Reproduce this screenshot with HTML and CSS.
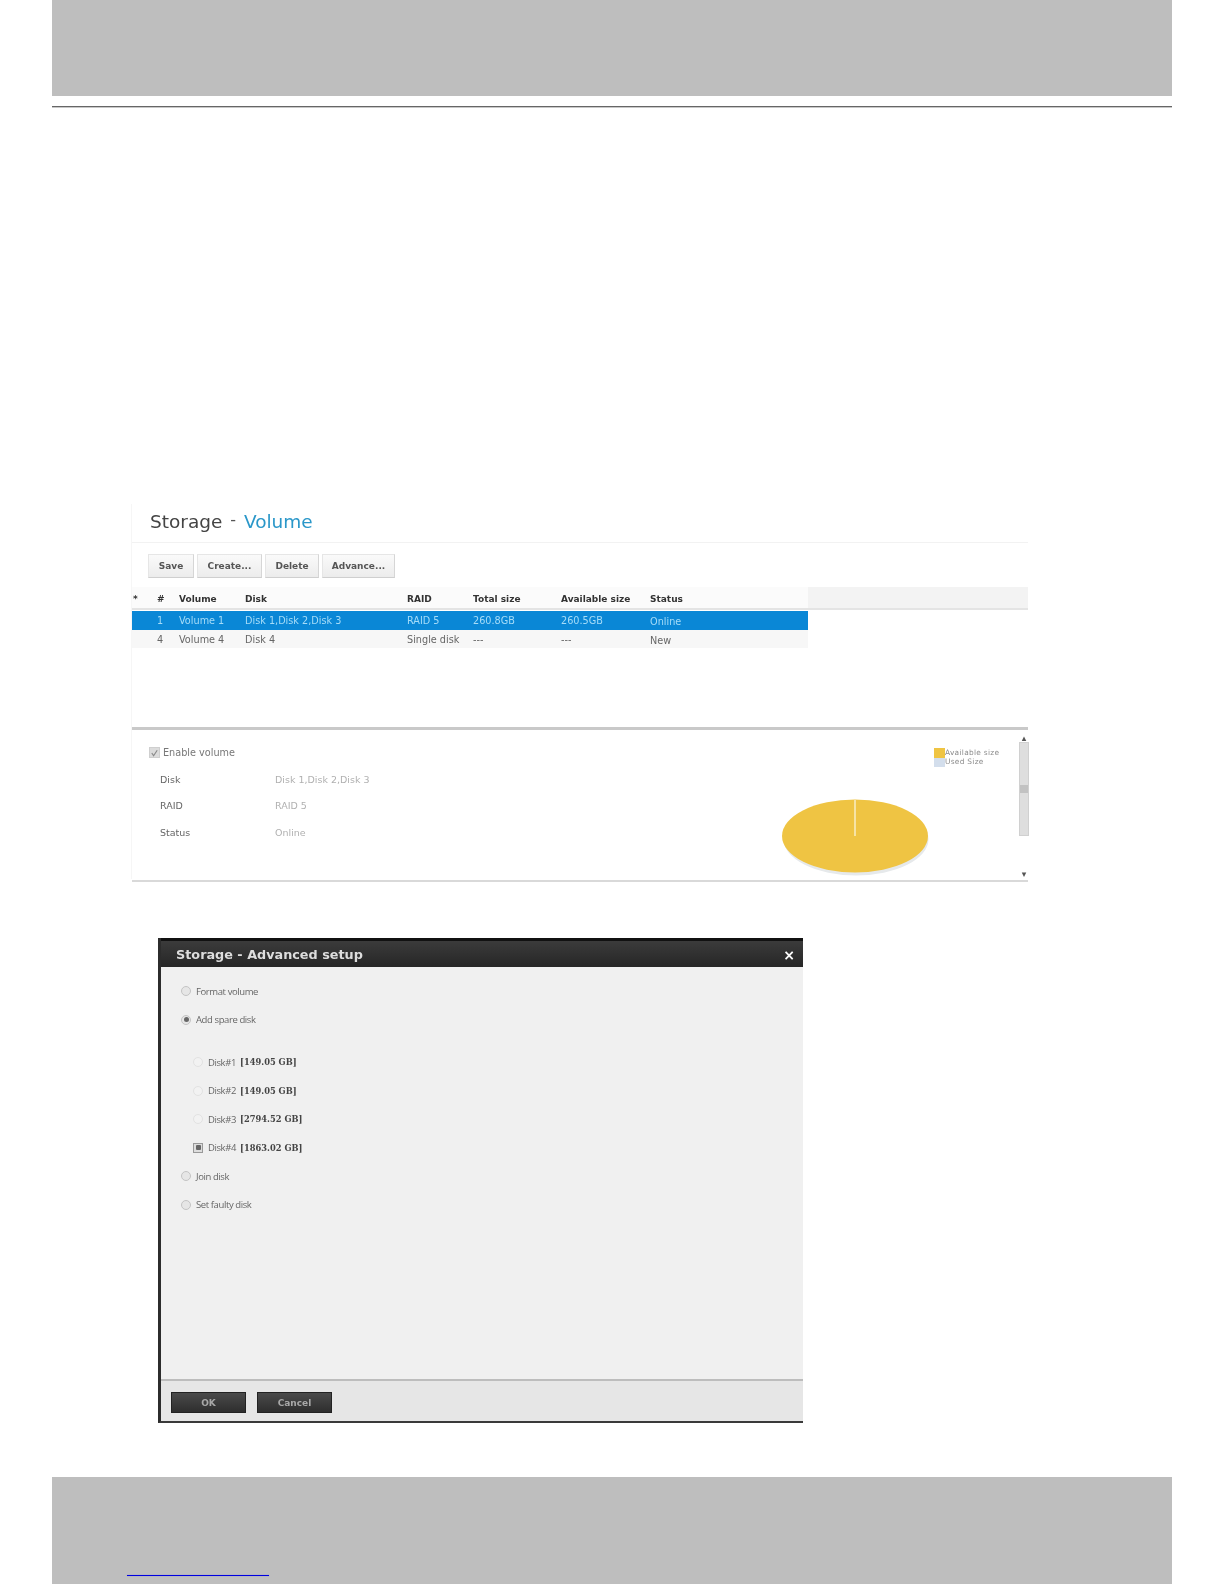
FILE: index.html
```html
<!DOCTYPE html>
<html lang="en">
<head>
<meta charset="utf-8">
<title>Storage - Volume</title>
<link rel="stylesheet" href="styles.css">
</head>
<body>
<div class="page">
  <header class="top-band"></header>
  <div class="top-rule"></div>

  <section class="volume-shot">
    <h1 class="title">Storage <span class="dash">-</span> <span class="accent">Volume</span></h1>
    <div class="toolbar">
      <button class="tool w-save">Save</button>
      <button class="tool w-create">Create...</button>
      <button class="tool w-delete">Delete</button>
      <button class="tool w-advance">Advance...</button>
    </div>
    <div class="grid-head">
      <div class="row head">
        <span>*</span><span>#</span><span>Volume</span><span>Disk</span><span>RAID</span><span>Total size</span><span>Available size</span><span>Status</span>
      </div>
    </div>
    <div class="row selected">
      <span></span><span>1</span><span>Volume 1</span><span>Disk 1,Disk 2,Disk 3</span><span>RAID 5</span><span>260.8GB</span><span>260.5GB</span><span class="nudge">Online</span>
    </div>
    <div class="row plain">
      <span></span><span>4</span><span>Volume 4</span><span>Disk 4</span><span>Single disk</span><span>---</span><span>---</span><span class="nudge">New</span>
    </div>
    <div class="splitter"></div>
    <div class="details">
      <label class="enable"><span class="check"><svg viewBox="0 0 10 10" width="10" height="10"><path d="M2 5l2 3 4-6" fill="none" stroke="#8a8a8a" stroke-width="1.3"/></svg></span>Enable volume</label>
      <dl class="info">
        <dt>Disk</dt><dd>Disk 1,Disk 2,Disk 3</dd>
        <dt>RAID</dt><dd>RAID 5</dd>
        <dt>Status</dt><dd>Online</dd>
      </dl>
      <div class="legend">
        <div class="legend-row"><i class="swatch avail"></i>Available size</div>
        <div class="legend-row"><i class="swatch used"></i>Used Size</div>
      </div>
      <svg class="pie" viewBox="0 0 160 84" width="160" height="84">
        <ellipse cx="74" cy="40" rx="72.5" ry="36.5" fill="#e6e9eb"/>
        <ellipse cx="73" cy="37" rx="73" ry="36.5" fill="#efc443"/>
        <path d="M73 1v36" stroke="#f9eec4" stroke-width="1.5"/>
      </svg>
      <div class="scrollbar">
        <span class="arrow">&#9652;</span>
        <div class="thumb"><i class="grip"></i></div>
        <span class="arrow">&#9662;</span>
      </div>
    </div>
  </section>

  <section class="dialog">
    <div class="dialog-head">
      <h2>Storage - Advanced setup</h2>
      <span class="close">&#215;</span>
    </div>
    <div class="dialog-body">
      <label class="opt"><i class="radio"></i>Format volume</label>
      <label class="opt"><i class="radio on"></i>Add spare disk</label>
      <div class="disks">
        <label class="opt disk"><i class="radio faint"></i>Disk#1 <b>[149.05 GB]</b></label>
        <label class="opt disk"><i class="radio faint"></i>Disk#2 <b>[149.05 GB]</b></label>
        <label class="opt disk"><i class="radio faint"></i>Disk#3 <b>[2794.52 GB]</b></label>
        <label class="opt disk"><i class="box"></i>Disk#4 <b>[1863.02 GB]</b></label>
      </div>
      <label class="opt"><i class="radio"></i>Join disk</label>
      <label class="opt"><i class="radio"></i>Set faulty disk</label>
    </div>
    <div class="dialog-foot">
      <button class="dark-btn">OK</button>
      <button class="dark-btn">Cancel</button>
    </div>
  </section>

  <footer class="bottom-band"><a class="link" href="#"></a></footer>
</div>
</body>
</html>
```
FILE: styles.css
```css
* { box-sizing: border-box; }
html, body { margin: 0; padding: 0; background: #fff; }
.page {
  width: 1224px;
  height: 1584px;
  display: flex;
  flex-direction: column;
  font-family: "DejaVu Sans", sans-serif;
  overflow: hidden;
}
.top-band { height: 96px; margin: 0 52px; background: #bebebe; flex: none; }
.top-rule { height: 1px; margin: 10px 52px 0; background: #666; flex: none; box-shadow: 0 1px 0 #c8c8c8; }

.volume-shot {
  width: 897px;
  height: 375px;
  margin: 397px 0 0 131px;
  flex: none;
  position: relative;
  border-left: 1px solid #f6f6f6;
  filter: blur(0.6px);
}
.title {
  margin: 0;
  height: 39px;
  padding: 5px 0 0 18px;
  font-size: 18.5px;
  line-height: 26px;
  font-weight: 400;
  color: #444;
  border-bottom: 1px solid #f2f2f2;
}
.dash { color: #555; position: relative; top: -3px; margin: 0 2px; font-size: 16px; }
.accent { color: #2a97c9; }
.toolbar { display: flex; gap: 3px; margin: 11px 0 0 16px; height: 24px; }
.tool {
  height: 24px;
  padding: 0;
  font: 700 9px "DejaVu Sans", sans-serif;
  color: #555;
  background: linear-gradient(#fafafa, #ececec);
  border: 1px solid #e6e6e6;
  border-bottom-color: #cfcfcf;
  border-right-color: #d6d6d6;
}
.w-save { width: 46px; }
.w-create { width: 65px; }
.w-delete { width: 54px; }
.w-advance { width: 73px; }

.grid-head {
  margin-top: 9px;
  height: 23px;
  background: #f3f3f3;
  border-bottom: 2px solid #e4e4e4;
}
.row {
  display: grid;
  grid-template-columns: 24px 22px 66px 162px 66px 88px 89px 158px;
  width: 676px;
  align-items: center;
  font-size: 9.7px;
  padding-left: 1px;
}
.head { height: 21px; padding-top: 3px; background: #fbfbfb; font-size: 9px; font-weight: 700; color: #333; }
.selected { height: 19px; background: #0a87d6; color: #a6dcf8; margin-top: 1px; }
.plain { height: 18px; background: #f7f7f7; color: #666; }
.nudge { position: relative; top: 1px; }
.splitter { margin-top: 79px; height: 3px; background: #c9c9c9; }

.details { position: relative; height: 152px; border-bottom: 2px solid #d9d9d9; padding: 15px 0 0 17px; }
.enable { display: flex; align-items: center; gap: 3px; font-size: 9.7px; color: #777; height: 14px; }
.check {
  width: 11px;
  height: 11px;
  background: #dcdcdc;
  border: 1px solid #cfcfcf;
  display: flex;
}
.check svg { display: block; }
.info {
  margin: 7px 0 0 11px;
  display: grid;
  grid-template-columns: 115px auto;
  justify-content: start;
  grid-auto-rows: 26.5px;
  align-items: center;
  font-size: 9.5px;
}
.info dt { color: #666; }
.info dd { margin: 0; color: #b0b0b0; }

.legend { position: absolute; left: 802px; top: 18px; font-size: 7.4px; color: #8a8a8a; letter-spacing: .3px; line-height: 10px; }
.legend-row { display: flex; align-items: center; gap: 0; height: 9.5px; white-space: nowrap; }
.swatch { width: 11px; height: 9.5px; display: block; }
.avail { background: #efc443; }
.used { background: #d3deec; }
.pie { position: absolute; left: 650px; top: 69px; }
.scrollbar {
  position: absolute;
  left: 887px;
  top: 4px;
  width: 10px;
  height: 144px;
  display: flex;
  flex-direction: column;
  align-items: center;
  justify-content: space-between;
  font-size: 9px;
  line-height: 8px;
  color: #555;
}
.thumb { flex: 1; width: 10px; margin: 0 0 34px; background: #dedede; border: 1px solid #d0d0d0; display: flex; align-items: flex-end; padding-bottom: 42px; }
.grip { display: block; width: 8px; height: 8px; background: #c2c2c2; }
.arrow { height: 8px; }

.dialog {
  width: 645px;
  height: 485px;
  margin: 59px 0 0 158px;
  flex: none;
  display: flex;
  flex-direction: column;
  background: #f0f0f0;
  border-left: 3px solid #2c2c2c;
  border-bottom: 2px solid #3a3a3a;
  filter: blur(0.6px);
}
.dialog-head {
  height: 29px;
  flex: none;
  display: flex;
  align-items: center;
  justify-content: space-between;
  padding: 4px 8px 0 15px;
  background: linear-gradient(#111 0 3px, #3b3b3b 3px, #262626);
  color: #ddd;
}
.dialog-head h2 { margin: 0; font-size: 12.8px; font-weight: 700; }
.close { font-size: 14px; font-weight: 700; color: #fff; }
.dialog-body {
  flex: 1;
  padding: 17px 0 0 18px;
  display: flex;
  flex-direction: column;
  gap: 14.5px;
}
.opt {
  display: flex;
  align-items: center;
  height: 14px;
  font-family: "Open Sans", sans-serif;
  font-size: 9.5px;
  letter-spacing: -.4px;
  color: #666;
  white-space: pre;
}
.opt b { font-family: "DejaVu Serif", serif; font-size: 8.3px; color: #444; margin-left: 2px; letter-spacing: 0; }
.disks { display: flex; flex-direction: column; gap: 14.5px; margin: 14px 0 0 12px; }
.radio, .box {
  width: 10px;
  height: 10px;
  margin: 0 5px 0 2px;
  flex: none;
  display: flex;
  align-items: center;
  justify-content: center;
  background: #e6e6e6;
  border: 1px solid #c4c4c4;
}
.radio { border-radius: 50%; }
.radio.faint { background: #f2f2f2; border-color: #e2e2e2; }
.radio.on::after, .box::after { content: ""; width: 5px; height: 5px; background: #666; border-radius: 50%; }
.box { background: #ddd; border-color: #999; }
.box::after { border-radius: 1px; }
.dialog-foot {
  height: 42px;
  flex: none;
  display: flex;
  gap: 11px;
  padding: 11px 0 0 10px;
  background: #e6e6e6;
  border-top: 2px solid #bdbdbd;
}
.dark-btn {
  width: 75px;
  height: 21px;
  padding: 0;
  font: 700 9px "DejaVu Sans", sans-serif;
  color: #a8a8a8;
  background: linear-gradient(#4a4a4a, #2e2e2e);
  border: 1px solid #222;
}

.bottom-band {
  margin: auto 52px 0;
  height: 107px;
  flex: none;
  background: #bebebe;
  position: relative;
}
.link {
  position: absolute;
  left: 75px;
  top: 98px;
  width: 142px;
  height: 1px;
  background: #0000e0;
  box-shadow: 0 0 1px #6a6ad8;
}
```
